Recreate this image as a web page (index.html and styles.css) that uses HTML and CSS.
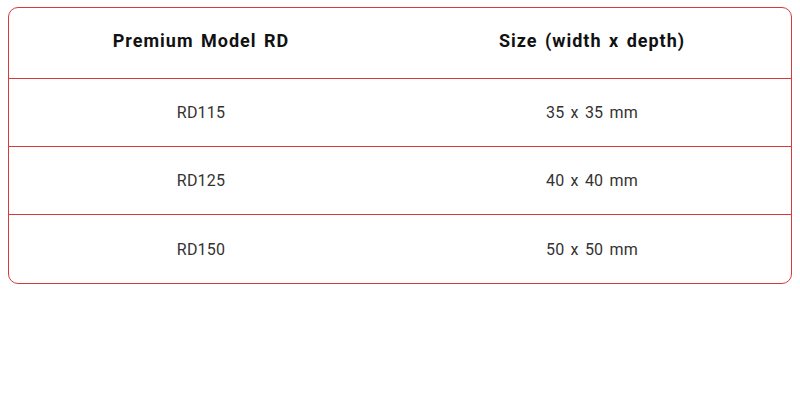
FILE: index.html
```html
<!DOCTYPE html>
<html>
<head>
<meta charset="utf-8">
<link rel="stylesheet" href="styles.css">
</head>
<body>
<div class="table">
  <div class="row head">
    <div class="cell">Premium Model RD</div>
    <div class="cell">Size (width x depth)</div>
  </div>
  <div class="row">
    <div class="cell">RD115</div>
    <div class="cell">35 x 35 mm</div>
  </div>
  <div class="row">
    <div class="cell">RD125</div>
    <div class="cell">40 x 40 mm</div>
  </div>
  <div class="row last">
    <div class="cell">RD150</div>
    <div class="cell">50 x 50 mm</div>
  </div>
</div>
</body>
</html>
```
FILE: styles.css
```css
html, body {
  background: #fff;
}
body {
  margin: 7px 8px;
  font-family: Roboto, "Liberation Sans", sans-serif;
}
.table {
  border: 1px solid #d63a3a;
  border-radius: 10px;
  overflow: hidden;
}
.row {
  display: grid;
  grid-template-columns: 384px 1fr;
  height: 67px;
  border-bottom: 1px solid #d63a3a;
  align-items: center;
  color: #333;
  font-size: 16px;
  word-spacing: 2px;
  letter-spacing: 0.2px;
}
.row.head {
  box-sizing: border-box;
  height: 71px;
  padding-bottom: 6px;
  font-weight: 700;
  font-size: 18px;
  letter-spacing: 1px;
  word-spacing: 2px;
  color: #111;
}
.row.last {
  height: 68px;
  border-bottom: none;
}
.cell {
  text-align: center;
}
```
